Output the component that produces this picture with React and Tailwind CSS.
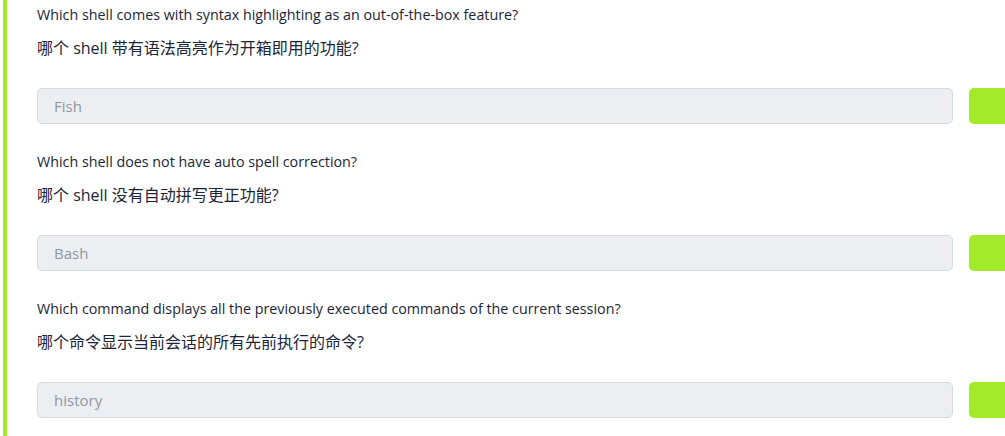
import React from "react";

const questions = [
  {
    en: "Which shell comes with syntax highlighting as an out-of-the-box feature?",
    zh: "哪个 shell 带有语法高亮作为开箱即用的功能?",
    answer: "Fish",
  },
  {
    en: "Which shell does not have auto spell correction?",
    zh: "哪个 shell 没有自动拼写更正功能?",
    answer: "Bash",
  },
  {
    en: "Which command displays all the previously executed commands of the current session?",
    zh: "哪个命令显示当前会话的所有先前执行的命令?",
    answer: "history",
  },
];

export default function App() {
  return (
    <div
      className="h-[436px] w-[1005px] overflow-hidden bg-white text-[#1c2538]"
      style={{ fontFamily: '"Open Sans", "Noto Sans CJK SC", sans-serif' }}
    >
      <div className="ml-[3px] flex h-full border-l-4 border-[#a3ea2a]">
        <div className="flex-1 pl-[30px] pt-[5px]">
          {questions.map((q, i) => (
            <div key={i} className={i > 0 ? "mt-[28px]" : ""}>
              <p className="h-5 text-[14.3px] leading-5">{q.en}</p>
              <p className="mt-[13px] h-5 text-[16px] leading-5">{q.zh}</p>
              <div className="mt-[30px] flex items-center gap-4">
                <div className="flex h-9 w-[916px] items-center rounded-[5px] border border-[#d6dae1] bg-[#eceef2] px-4 text-[15px] text-[#8e97a5]">
                  {q.answer}
                </div>
                <div className="h-9 w-[90px] shrink-0 rounded-[5px] bg-[#a3ea2a]" />
              </div>
            </div>
          ))}
        </div>
      </div>
    </div>
  );
}
